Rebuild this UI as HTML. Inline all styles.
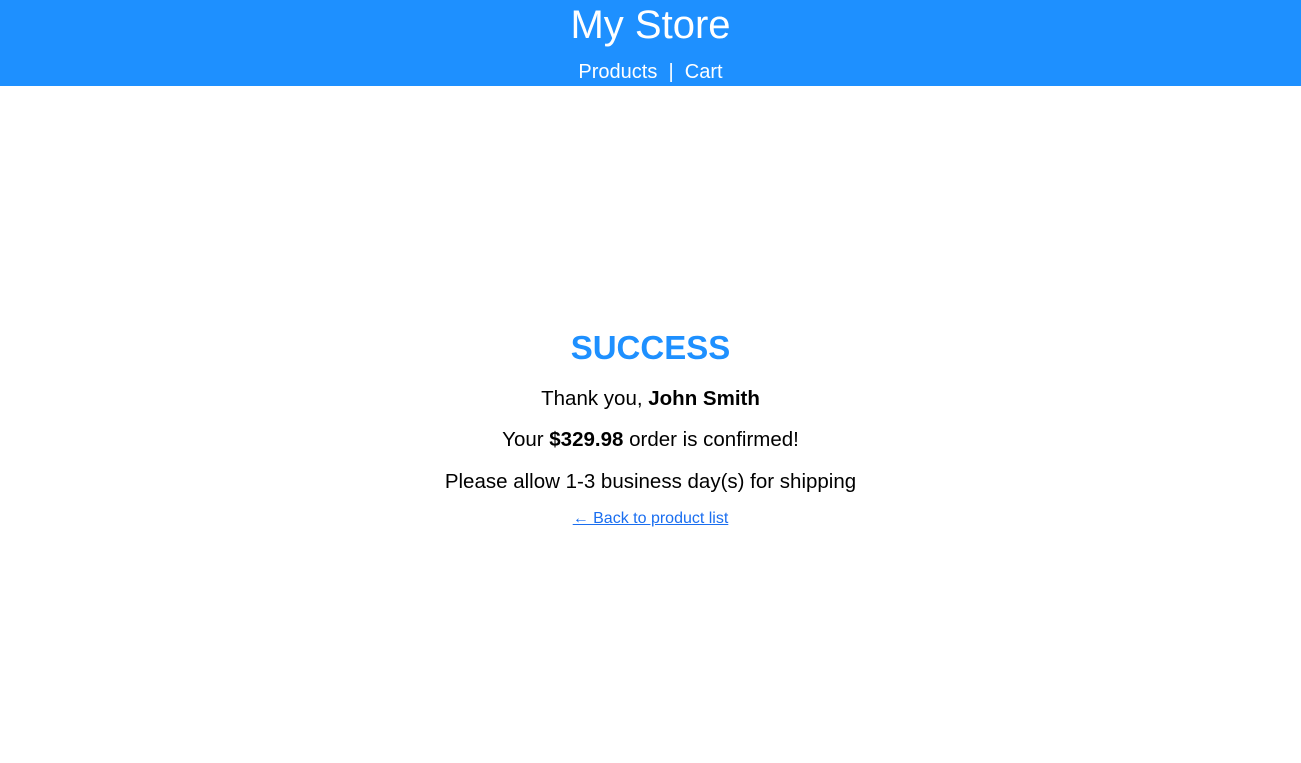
<!DOCTYPE html>
<html><head><style>
body{margin:0;font-family:"Liberation Sans",sans-serif;background:#fff;width:1301px;height:763px;overflow:hidden}
header{background:#1e90ff;height:86px;color:#fff;text-align:center;position:relative}
.t{position:absolute;left:0;right:0;top:2px;font-size:40px;line-height:46px}
.n{position:absolute;left:0;right:0;top:59px;font-size:20px;line-height:26px}
.c{position:absolute;left:0;right:0;text-align:center;font-size:20.5px;color:#000}
a{color:#1a6ef0}
</style></head><body>
<header><div class="t">My Store</div><div class="n">Products &nbsp;|&nbsp; Cart</div></header>
<div class="c" style="top:326px;font-size:33px;font-weight:bold;color:#1e90ff;line-height:44px">SUCCESS</div>
<div class="c" style="top:387px;line-height:24px">Thank you, <b>John Smith</b></div>
<div class="c" style="top:428px;line-height:24px">Your <b>$329.98</b> order is confirmed!</div>
<div class="c" style="top:470px;line-height:24px">Please allow 1-3 business day(s) for shipping</div>
<div class="c" style="top:509px;font-size:16px;line-height:20px"><a href="#">← Back to product list</a></div>
</body></html>
